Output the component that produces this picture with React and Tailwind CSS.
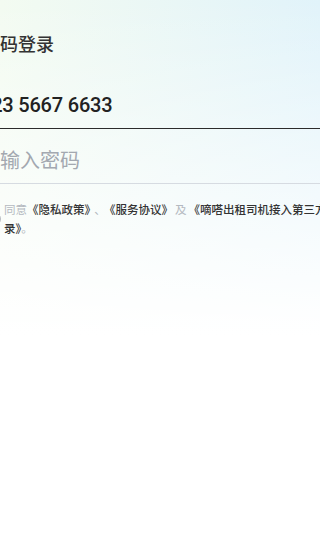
export default function App() {
  const cjk = { fontFamily: '"Noto Sans CJK SC", "Noto Sans", sans-serif' };
  return (
    <div className="w-[320px] h-[559px] overflow-hidden bg-[linear-gradient(to_right,#f3fbf1,#e1f3fa)]" style={cjk}>
      <div className="w-full h-full bg-[linear-gradient(to_bottom,rgba(255,255,255,0)_0%,rgba(255,255,255,0.6)_35%,#ffffff_60%)]">
        <div className="-ml-[18px] w-[420px]">
          <div className="pt-[32px] text-[18px] leading-[22px] text-[#333333] font-medium">密码登录</div>

          <div className="mt-[39px] pb-[11px] border-b border-[#2b2b2b]">
            <div
              className="-ml-[2px] text-[20px] leading-[24px] text-[#222222] font-medium tracking-[-0.2px]"
              style={{ fontFamily: 'Roboto, "Noto Sans", sans-serif' }}
            >
              123 5667 6633
            </div>
          </div>

          <div className="mt-[19px] pb-[11px] border-b border-[#d6dbe1]">
            <div className="-ml-[2px] text-[20px] leading-[24px] text-[#a3a8b0]">请输入密码</div>
          </div>

          <div className="mt-[16px] flex gap-[3px]">
            <div className="ml-[5px] mt-[12px] w-[14px] h-[14px] shrink-0 rounded-full border border-[#b8bcc2]"></div>
            <div className="text-[11.5px] leading-[19px]">
              <div className="whitespace-nowrap">
                <span className="text-[#b4b9c0]">同意</span>
                <span className="text-[#333333] font-medium">《隐私政策》</span>
                <span className="text-[#b4b9c0] mx-[4px]">、</span>
                <span className="text-[#333333] font-medium">《服务协议》</span>
                <span className="text-[#b4b9c0] mx-[2px]">及</span>
                <span className="text-[#333333] font-medium">《嘀嗒出租司机接入第三方协议记</span>
              </div>
              <div className="whitespace-nowrap">
                <span className="text-[#333333] font-medium">录》</span>
                <span className="text-[#b4b9c0]">。</span>
              </div>
            </div>
          </div>
        </div>
      </div>
    </div>
  );
}
